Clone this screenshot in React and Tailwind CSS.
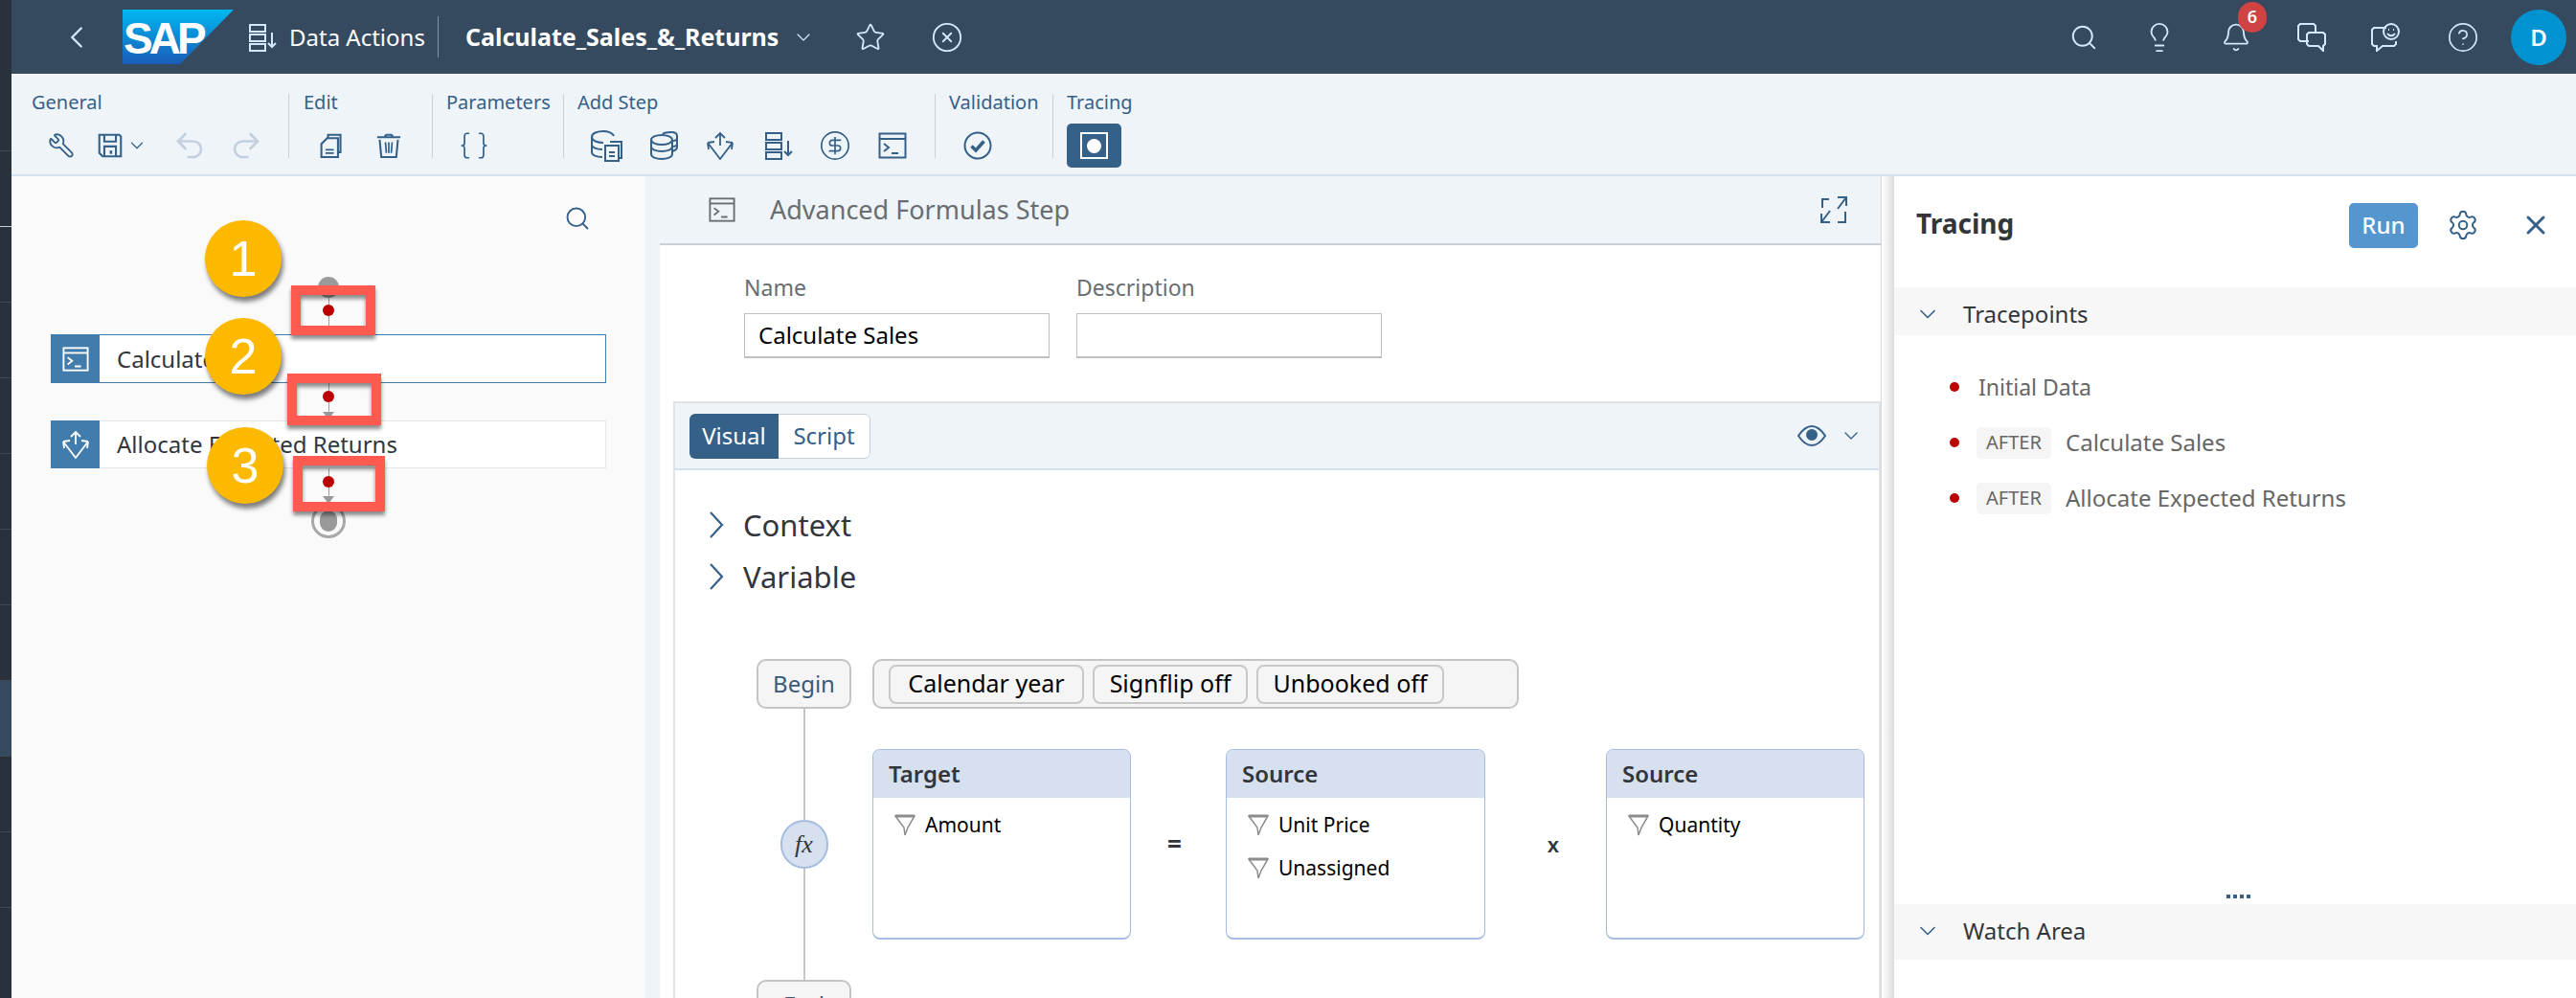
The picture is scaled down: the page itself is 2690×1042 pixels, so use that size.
import { Search, Lightbulb, Bell, Star, CircleX, CircleHelp, Settings, X, ChevronLeft, ChevronDown, Wrench, Undo2, Redo2, Braces, CircleDollarSign } from 'lucide-react';

const font = 'font-["Noto_Sans",sans-serif]';

function Svg({ className, size = 30, vb = 30, children }) {
  return (
    <svg width={size} height={size} viewBox={`0 0 ${vb} ${vb}`} fill="none" stroke="currentColor" strokeWidth="2" className={className}>
      {children}
    </svg>
  );
}

function ListSort({ className }) {
  return (
    <Svg className={className}>
      <rect x="2" y="2" width="16" height="7" />
      <rect x="2" y="12" width="16" height="7" />
      <rect x="2" y="22" width="16" height="7" />
      <path d="M25 10v15M21 21l4 4 4-4" />
    </Svg>
  );
}

function Floppy({ className }) {
  return (
    <Svg size={26} vb={30} className={className}>
      <path d="M2 2h24l2 2v24H6l-4-4z" strokeWidth="2.4" />
      <path d="M8 2v8h14V2M8 28V16h14v12" strokeWidth="2.4" />
      <path d="M16 21v4" strokeWidth="3" />
    </Svg>
  );
}

function Copy({ className }) {
  return (
    <Svg size={26} vb={30} className={className}>
      <path d="M11 7V2h15v21h-3" strokeWidth="2.4" />
      <path d="M10 6h13v23H3V13z" strokeWidth="2.4" />
      <path d="M8 20h10M8 24h10" />
    </Svg>
  );
}

function Trash({ className }) {
  return (
    <Svg size={26} vb={30} className={className}>
      <path d="M1 5h28M10 4l2-2h6l2 2" strokeWidth="2.4" />
      <path d="M4 8l2 21h18l2-21" strokeWidth="2.4" />
      <path d="M11 11l1 13M15 11v13M19 11l-1 13" />
    </Svg>
  );
}

function Db({ className }) {
  return (
    <Svg className={className}>
      <ellipse cx="13" cy="9" rx="11" ry="5" />
      <path d="M2 9v15c0 3 5 5 11 5s11-2 11-5V9M2 16c0 3 5 5 11 5s11-2 11-5" />
      <path d="M14 3c2-2 6-2 9-2 4 0 6 2 6 4v12c0 2-2 3-5 4M24 10c3 0 5-1 5-3M24 16c3 0 5-1 5-3" />
    </Svg>
  );
}

function DbCopy({ className }) {
  return (
    <Svg size={34} vb={34} className={className}>
      <path d="M24 7c-1-3-6-5-11-5C7 2 1 4 1 8s6 6 12 6M1 8v16c0 3 5 5 11 5M1 16c0 3 5 5 11 5" />
      <path d="M20 13h12v17h-3" />
      <path d="M15 17h14v16H15z" />
      <path d="M19 24h6M19 28h6" />
    </Svg>
  );
}

function Fan({ className, size = 30 }) {
  return (
    <svg width={size} height={size} viewBox="0 0 30 30" fill="none" stroke="currentColor" strokeWidth="1.8" className={className}>
      <path d="M15 2v13M10 7l5-5 5 5" />
      <path d="M2 12l13 17 13-17M2 12l1 7M2 12l7-1M28 12l-1 7M28 12l-7-1" />
    </svg>
  );
}

function Term({ className, size = 30 }) {
  return (
    <Svg size={size} className={className}>
      <rect x="1.5" y="2.5" width="27" height="25" />
      <path d="M1.5 8h27" />
      <path d="M6 13l5 4-5 4M14 23h7" />
    </Svg>
  );
}

function Funnel() {
  return (
    <svg width="22" height="23" viewBox="0 0 22 23" fill="none" className="shrink-0">
      <path d="M1 2h20l-7 12-3 8-1-8z" stroke="#8c8c8c" strokeWidth="1.5" />
      <path d="M1 2h20" stroke="#8c8c8c" strokeWidth="3" />
    </svg>
  );
}

function Chat({ className }) {
  return (
    <Svg className={className}>
      <path d="M12 19H3l-2-2V3l2-2h14l2 2v6" />
      <path d="M12 10h15l2 2v10l-2 2v5l-5-5H12l-2-2V12z" />
    </Svg>
  );
}

function Feedback({ className }) {
  return (
    <Svg className={className}>
      <path d="M16 5H3L1 7v15l2 2h3v5l6-5h12l2-2v-3" />
      <circle cx="21" cy="9" r="8" />
      <path d="M17 11c2 3 6 3 8 0M18 7h1M23 7h1" />
    </Svg>
  );
}

function Expand({ className }) {
  return (
    <Svg className={className}>
      <path d="M3 13V4h7M19 2h9v9M28 2L19 14M27 17v11h-8M11 28H2v-9M2 28l9-12" />
    </Svg>
  );
}

function CheckRound({ className }) {
  return (
    <Svg className={className}>
      <circle cx="15" cy="15" r="13.5" />
      <path d="M8.5 15.5l4.5 4.5 8.5-9.5" strokeWidth="3.6" />
    </Svg>
  );
}

function SapLogo() {
  return (
    <svg width="116" height="57" viewBox="0 0 116 57" className="ml-[38px] shrink-0">
      <defs>
        <linearGradient id="sap" x1="0" y1="0" x2="0" y2="1">
          <stop offset="0" stopColor="#00b8f1" />
          <stop offset="1" stopColor="#1a5cb8" />
        </linearGradient>
      </defs>
      <polygon points="0,0 116,0 60,57 0,57" fill="url(#sap)" />
      <text x="1" y="46" fill="#fff" fontSize="46" fontWeight="700" letterSpacing="-4" fontFamily="Liberation Sans, sans-serif">SAP</text>
    </svg>
  );
}

function Group({ label, className, children }) {
  return (
    <div className={`h-[67px] shrink-0 border-l border-[#c9d1d9] ${className}`}>
      <div className="h-[39px] text-[20px] leading-[18px] text-[#356088] whitespace-nowrap">{label}</div>
      <div className="flex items-center h-[29px] text-[#356088]">{children}</div>
    </div>
  );
}

function Header() {
  return (
    <div className="h-[77px] bg-[#354a5f] flex items-center text-white shrink-0">
      <ChevronLeft size={38} strokeWidth={1.5} className="ml-[49px] -mr-[9px] text-[#d1e8ff]" />
      <SapLogo />
      <ListSort className="ml-[15px] text-[#d1e8ff]" />
      <span className="ml-[13px] text-[24px] text-white whitespace-nowrap">Data Actions</span>
      <div className="ml-[13px] h-[43px] w-px bg-[#8696a9]" />
      <span className="ml-[28px] text-[25px] font-bold whitespace-nowrap">Calculate_Sales_&amp;_Returns</span>
      <ChevronDown size={24} strokeWidth={1.2} className="ml-[14px] text-[#d1e8ff]" />
      <Star size={32} strokeWidth={1.4} className="ml-[42px] text-[#d1e8ff]" />
      <CircleX size={34} strokeWidth={1.3} className="ml-[47px] text-[#d1e8ff]" />
      <div className="ml-auto flex items-center text-[#d1e8ff] pr-[10px]">
        <Search size={30} strokeWidth={1.5} />
        <Lightbulb size={34} strokeWidth={1.3} className="ml-[47px]" />
        <div className="relative ml-[47px]">
          <Bell size={32} strokeWidth={1.4} />
          <span className="absolute -top-[21px] left-[18px] w-[30px] h-[32px] rounded-full bg-[#d04343] text-white text-[18px] font-semibold flex items-center justify-center">6</span>
        </div>
        <Chat className="ml-[48px]" />
        <Feedback className="ml-[47px]" />
        <CircleHelp size={34} strokeWidth={1.2} className="ml-[49px]" />
        <div className="ml-[33px] w-[58px] h-[58px] rounded-full bg-[#0092d1] text-white text-[24px] font-semibold flex items-center justify-center">D</div>
      </div>
    </div>
  );
}

function Toolbar() {
  return (
    <div className="h-[107px] bg-[#eff4f9] border-b-2 border-[#d5e2f2] flex items-start pt-[21px] shrink-0">
      <Group label="General" className="w-[289px] pl-[21px] !border-l-0">
        <Wrench size={28} strokeWidth={1.6} className="ml-[17px] -scale-x-100" />
        <Floppy className="ml-[24px]" />
        <ChevronDown size={22} strokeWidth={1.3} className="ml-[4px]" />
        <Undo2 size={36} strokeWidth={1.8} className="ml-[26px] shrink-0 text-[#c3d1de]" />
        <Redo2 size={36} strokeWidth={1.8} className="ml-[23px] shrink-0 text-[#c3d1de]" />
      </Group>
      <Group label="Edit" className="w-[150px] pl-[15px]">
        <Copy className="ml-[16px]" />
        <Trash className="ml-[34px]" />
      </Group>
      <Group label="Parameters" className="w-[137px] pl-[14px]">
        <Braces size={34} strokeWidth={1.2} className="ml-[12px] shrink-0" />
      </Group>
      <Group label="Add Step" className="w-[388px] pl-[14px]">
        <DbCopy className="ml-[14px]" />
        <Db className="ml-[27px]" />
        <Fan className="ml-[29px]" />
        <ListSort className="ml-[31px]" />
        <CircleDollarSign size={34} strokeWidth={1.2} className="ml-[27px] shrink-0" />
        <Term className="ml-[28px]" />
      </Group>
      <Group label="Validation" className="w-[123px] pl-[14px]">
        <CheckRound className="ml-[15px]" />
      </Group>
      <Group label="Tracing" className="pl-[14px]">
        <div className="w-[57px] h-[46px] rounded-[5px] bg-[#356088] flex items-center justify-center mt-[1px]">
          <div className="w-[29px] h-[28px] border-2 border-white flex items-center justify-center">
            <div className="w-[15px] h-[15px] rounded-full bg-white" />
          </div>
        </div>
      </Group>
    </div>
  );
}

function Connector({ h, dot, arrow }) {
  return (
    <div className={`relative w-px bg-[#a0a0a0] ${h}`}>
      <span className={`absolute -left-[6px] w-[12px] h-[12px] rounded-full bg-[#bb0000] ${dot}`} />
      {arrow && <span className={`absolute -left-[6px] w-0 h-0 border-x-[6.5px] border-x-transparent border-t-[8px] border-t-[#9a9a9a] ${arrow}`} />}
    </div>
  );
}

function Node({ icon, label, selected }) {
  return (
    <div className={`w-[580px] flex items-center border bg-white ${selected ? 'h-[51px] border-[#427cac]' : 'h-[50px] border-[#e5e5e5]'}`}>
      <div className={`w-[51px] -ml-px bg-[#427cac] flex items-center justify-center text-white shrink-0 ${selected ? 'h-[51px]' : 'h-[50px]'}`}>{icon}</div>
      <span className="ml-[18px] text-[24px] text-[#32363a] whitespace-nowrap">{label}</span>
    </div>
  );
}

function Callout({ n, className }) {
  return (
    <div className={`absolute w-[80px] h-[80px] rounded-full bg-[#fdb900] shadow-[2px_5px_5px_rgba(0,0,0,0.5)] flex items-center justify-center text-white text-[52px] font-["Liberation_Sans",sans-serif] ${className}`}>{n}</div>
  );
}

function Mark({ className }) {
  return <div className={`absolute border-[10px] border-[#ff5a4f] shadow-[0_4px_4px_rgba(0,0,0,0.45),inset_0_4px_4px_rgba(0,0,0,0.45)] ${className}`} />;
}

function LeftPanel() {
  return (
    <div className="relative w-[662px] shrink-0 bg-[#fafafa] overflow-hidden">
      <div className="flex justify-end pr-[57px] pt-[30px]">
        <Search size={28} strokeWidth={1.6} className="text-[#356088]" />
      </div>
      <div className="ml-[41px] w-[580px] flex flex-col items-center">
        <div className="mt-[47px] w-[22px] h-[22px] rounded-full bg-[#9a9a9a]" />
        <Connector h="h-[38px]" dot="top-[7px]" />
        <Node selected icon={<Term size={28} />} label="Calculate Sales" />
        <Connector h="h-[39px]" dot="top-[8px]" arrow="top-[30px]" />
        <Node icon={<Fan size={30} />} label="Allocate Expected Returns" />
        <Connector h="h-[37px]" dot="top-[8px]" arrow="top-[29px]" />
        <div className="w-[36px] h-[36px] rounded-full border-[3px] border-[#a8a8a8] flex items-center justify-center">
          <div className="w-[18px] h-[22px] rounded-full bg-[#9a9a9a]" />
        </div>
      </div>
      <Mark className="left-[292px] top-[114px] w-[88px] h-[52px]" />
      <Mark className="left-[288px] top-[206px] w-[98px] h-[54px]" />
      <Mark className="left-[294px] top-[292px] w-[96px] h-[58px]" />
      <Callout n="1" className="left-[202px] top-[46px]" />
      <Callout n="2" className="left-[202px] top-[148px]" />
      <Callout n="3" className="left-[204px] top-[262px]" />
    </div>
  );
}

function Field({ label, value }) {
  return (
    <div className="w-[319px]">
      <div className="h-[24px] leading-[24px] text-[23px] text-[#6a6d70]">{label}</div>
      <div className="mt-[15px] h-[47px] bg-white border border-[#bfbfbf] border-b-2 px-[14px] flex items-center text-[24px] text-black">{value}</div>
    </div>
  );
}

function Chip({ children, className }) {
  return <span className={`h-[41px] rounded-[8px] border-2 border-[#c8c8c8] bg-[#f5f5f5] flex items-center justify-center text-[25px] text-black whitespace-nowrap ${className}`}>{children}</span>;
}

function FlowBox({ children }) {
  return <div className="w-[99px] h-[52px] shrink-0 rounded-[10px] border-2 border-[#c4c4c4] bg-[#f5f5f5] flex items-center justify-center text-[24px] text-[#3b5a7a]">{children}</div>;
}

function Operand({ title, items, w }) {
  return (
    <div className={`${w} h-[199px] shrink-0 rounded-[8px] border border-[#a6bde0] border-b-2 overflow-hidden bg-white`}>
      <div className="h-[50px] bg-[#d6e0ef] pl-[16px] flex items-center text-[24px] font-semibold text-[#32363a]">{title}</div>
      <div className="pl-[22px] pt-[6px]">
        {items.map((i) => (
          <div key={i} className="h-[45px] flex items-center gap-[10px] text-[21px] text-black">
            <Funnel />
            {i}
          </div>
        ))}
      </div>
    </div>
  );
}

function MiddlePanel() {
  return (
    <div className="w-[1304px] shrink-0 flex bg-[#eff4f9]">
      <div className="w-[15px] shrink-0" />
      <div className="w-[1275px] shrink-0 flex flex-col overflow-hidden">
        <div className="h-[72px] border-b-2 border-[#c9cfd6] flex items-center shrink-0">
          <Term size={28} className="ml-[51px] text-[#6a6d70]" />
          <span className="ml-[36px] text-[27px] text-[#6a6d70] whitespace-nowrap">Advanced Formulas Step</span>
          <Expand className="ml-auto mr-[34px] text-[#356088]" />
        </div>
        <div className="flex-1 bg-white">
          <div className="pl-[88px] pt-[32px] flex gap-[28px]">
            <Field label="Name" value="Calculate Sales" />
            <Field label="Description" />
          </div>
          <div className="mt-[45px] ml-[14px] border-x-2 border-t-2 border-[#e0e3e6]">
            <div className="h-[70px] bg-[#eff4f9] border-b-2 border-[#d5e2f2] flex items-center pl-[15px] pr-[17px]">
              <div className="flex h-[47px] text-[24px] rounded-[6px] overflow-hidden">
                <span className="w-[93px] bg-[#356088] text-white flex items-center justify-center">Visual</span>
                <span className="w-[96px] bg-white text-[#356088] border border-[#c9cfd6] border-l-0 rounded-r-[6px] flex items-center justify-center">Script</span>
              </div>
              <svg width="30" height="24" viewBox="0 0 30 24" fill="none" stroke="#356088" strokeWidth="2" className="ml-auto">
                <path d="M1 12c4-6 9-10 14-10s10 4 14 10c-4 6-9 10-14 10S5 18 1 12z" />
                <circle cx="15" cy="11" r="5" fill="#356088" />
              </svg>
              <ChevronDown size={24} strokeWidth={1.4} className="ml-[14px] text-[#356088]" />
            </div>
            <div className="pt-[30px] pl-[35px]">
              {['Context', 'Variable'].map((t) => (
                <div key={t} className="h-[54px] flex items-center text-[31px] text-[#32363a]">
                  <svg width="16" height="28" viewBox="0 0 16 28" fill="none" stroke="#356088" strokeWidth="2.2">
                    <path d="M2 1l12 13L2 27" />
                  </svg>
                  <span className="ml-[20px]">{t}</span>
                </div>
              ))}
            </div>
            <div className="mt-[59px] ml-[85px] flex gap-[22px]">
              <div className="w-[99px] shrink-0 flex flex-col items-center">
                <FlowBox>Begin</FlowBox>
                <div className="w-[2px] h-[116px] bg-[#c4c4c4]" />
                <div className="w-[50px] h-[51px] shrink-0 rounded-full bg-[#d6e0ef] border-2 border-[#a6bde0] flex items-center justify-center text-[26px] italic text-[#32363a] font-['Liberation_Serif',serif]">fx</div>
                <div className="w-[2px] h-[116px] bg-[#c4c4c4]" />
                <FlowBox>End</FlowBox>
              </div>
              <div>
                <div className="w-[675px] h-[52px] rounded-[10px] border-2 border-[#c4c4c4] bg-[#f5f5f5] flex items-center pl-[15px] gap-[9px]">
                  <Chip className="w-[204px]">Calendar year</Chip>
                  <Chip className="w-[162px]">Signflip off</Chip>
                  <Chip className="w-[196px]">Unbooked off</Chip>
                </div>
                <div className="mt-[42px] flex items-center">
                  <Operand w="w-[270px]" title="Target" items={['Amount']} />
                  <span className="w-[99px] pr-[8px] text-center text-[26px] font-bold text-[#32363a]">=</span>
                  <Operand w="w-[271px]" title="Source" items={['Unit Price', 'Unassigned']} />
                  <span className="w-[126px] pl-[16px] text-center text-[22px] font-semibold text-[#32363a]">x</span>
                  <Operand w="w-[270px]" title="Source" items={['Quantity']} />
                </div>
              </div>
            </div>
          </div>
        </div>
      </div>
      <div className="w-[14px] shrink-0 border-l border-[#d9d9d9] bg-gradient-to-r from-white to-[#dcdcdc]" />
    </div>
  );
}

function TraceRow({ after, label }) {
  return (
    <div className="h-[58px] flex items-center text-[#666]">
      <span className="w-[10px] h-[10px] rounded-full bg-[#bb0000] shrink-0" />
      {after ? (
        <>
          <span className="ml-[18px] w-[78px] h-[33px] rounded-[5px] bg-[#f5f5f5] text-[20px] flex items-center justify-center">AFTER</span>
          <span className="ml-[15px] text-[24px]">{label}</span>
        </>
      ) : (
        <span className="ml-[20px] text-[23px]">{label}</span>
      )}
    </div>
  );
}

function RightPanel() {
  return (
    <div className="flex-1 bg-white flex flex-col">
      <div className="h-[116px] flex items-center pl-[23px] pb-[14px] shrink-0">
        <span className="text-[28px] font-bold text-[#32363a] -mt-[5px]">Tracing</span>
        <span className="ml-auto w-[72px] h-[47px] rounded-[5px] bg-[#5496cd] text-white text-[24px] font-medium flex items-center justify-center">Run</span>
        <Settings size={34} strokeWidth={1.4} className="ml-[30px] text-[#356088]" />
        <X size={32} strokeWidth={2.2} className="ml-[43px] mr-[26px] text-[#356088]" />
      </div>
      <div className="h-[50px] bg-[#f7f7f7] flex items-center pl-[21px] pt-[6px] shrink-0 text-[24px] text-[#32363a]">
        <ChevronDown size={28} strokeWidth={1.4} className="text-[#356088]" />
        <span className="ml-[23px]">Tracepoints</span>
      </div>
      <div className="flex-1 pl-[58px] pt-[25px]">
        <TraceRow label="Initial Data" />
        <TraceRow after label="Calculate Sales" />
        <TraceRow after label="Allocate Expected Returns" />
      </div>
      <div className="h-[10px] flex gap-[3px] pl-[347px] items-start shrink-0">
        {[0, 1, 2, 3].map((i) => <span key={i} className="w-[4px] h-[4px] bg-[#356088]" />)}
      </div>
      <div className="h-[58px] bg-[#f7f7f7] flex items-center pl-[21px] pb-[2px] shrink-0 text-[24px] text-[#32363a]">
        <ChevronDown size={28} strokeWidth={1.4} className="text-[#356088]" />
        <span className="ml-[23px]">Watch Area</span>
      </div>
      <div className="h-[40px] shrink-0" />
    </div>
  );
}

export default function App() {
  return (
    <div className={`w-[2690px] h-[1042px] flex overflow-hidden ${font}`}>
      <div className="w-[12px] shrink-0 flex flex-col bg-[#29313d] pt-[157px]">
        {[0, 1, 2, 3, 4, 5, 6, 7, 8, 9, 10].map((i) => (
          <div key={i} className={`h-[79px] shrink-0 border-t ${i === 1 ? 'border-[#c8ccd2]' : 'border-[#3f4a59]'} ${i === 7 ? 'bg-[#354a5f]' : ''}`} />
        ))}
      </div>
      <div className="w-[2678px] flex flex-col">
        <Header />
        <Toolbar />
        <div className="h-[858px] flex">
          <LeftPanel />
          <MiddlePanel />
          <RightPanel />
        </div>
      </div>
    </div>
  );
}
